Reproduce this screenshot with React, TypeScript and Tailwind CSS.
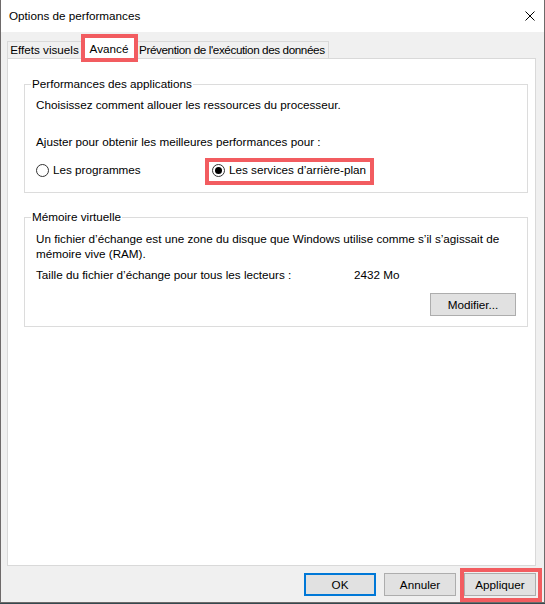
import React from "react";

function Radio({ checked, label }: { checked?: boolean; label: string }) {
  return (
    <span className="flex items-center gap-[4px]">
      <span className="w-[13px] h-[13px] rounded-full border border-[#333] bg-white flex items-center justify-center">
        {checked && <span className="w-[7px] h-[7px] rounded-full bg-black" />}
      </span>
      <span>{label}</span>
    </span>
  );
}

function Btn({ label, primary, className }: { label: string; primary?: boolean; className?: string }) {
  return (
    <div
      className={
        "w-[72px] h-[23px] flex items-center justify-center bg-[#e1e1e1] " +
        (primary ? "border-2 border-[#0078d7]" : "border border-[#adadad]") +
        (className ? " " + className : "")
      }
    >
      {label}
    </div>
  );
}

export default function App() {
  return (
    <div
      className="w-[545px] h-[604px] bg-[#34494f] text-[11.7px] text-black leading-[16px]"
      style={{ fontFamily: '"Segoe UI", "Liberation Sans", Arial, sans-serif' }}
    >
      <div className="h-[603px] flex flex-col border-x border-b border-[#6e6a6a]">
        {/* Title bar */}
        <div className="h-[32px] bg-white flex items-center justify-between pl-[8px] pr-[9px] shrink-0">
          <span>Options de performances</span>
          <svg width="10" height="10" viewBox="0 0 10 10" className="text-black">
            <path d="M0.5 0.5 L9.5 9.5 M9.5 0.5 L0.5 9.5" stroke="currentColor" strokeWidth="1" />
          </svg>
        </div>

        {/* Body */}
        <div className="flex-1 bg-[#f0f0f0] flex flex-col pl-[6px] pr-[8px]">
          {/* Tabs */}
          <div className="h-[26px] flex items-end shrink-0 whitespace-nowrap">
            <div className="w-[74px] h-[17px] border-t border-l border-[#d9d9d9] flex items-center justify-center">
              Effets visuels
            </div>
            <div className="relative z-10 w-[54px] h-[22px] -mb-px bg-white border-t border-x border-[#d9d9d9] flex items-center justify-center pl-[2px]">
              Avancé
              <div className="absolute left-[-1px] top-[-4px] w-[57px] h-[28px] border-4 border-[#f25c60]" />
            </div>
            <div className="h-[17px] border-t border-r border-[#d9d9d9] flex items-center pl-[4px] pr-[3px] tracking-[-0.4px]">
              Prévention de l'exécution des données
            </div>
          </div>

          {/* Panel */}
          <div className="h-[508px] bg-white border border-[#d9d9d9] pl-[16px] pt-[17px] shrink-0">
            <fieldset className="w-[504px] border border-[#dcdcdc] px-[6px] pb-[14px]">
              <legend className="px-[1px]">Performances des applications</legend>
              <div className="pl-[5px]">
                <p className="mt-[5px]">Choisissez comment allouer les ressources du processeur.</p>
                <p className="mt-[21px]">Ajuster pour obtenir les meilleures performances pour :</p>
                <div className="mt-[12px] flex">
                  <div className="w-[176px]">
                    <Radio label="Les programmes" />
                  </div>
                  <div className="relative">
                    <Radio checked label="Les services d’arrière-plan" />
                    <div className="absolute left-[-7px] top-[-4px] w-[169px] h-[27px] border-4 border-[#f25c60]" />
                  </div>
                </div>
              </div>
            </fieldset>

            <fieldset className="mt-[16px] w-[504px] border border-[#dcdcdc] px-[6px] pb-[10px]">
              <legend className="px-[1px]">Mémoire virtuelle</legend>
              <div className="pl-[5px] leading-[15px]">
                <p className="mt-[6px]">
                  Un fichier d’échange est une zone du disque que Windows utilise comme s’il s’agissait de
                  <br />
                  mémoire vive (RAM).
                </p>
                <div className="mt-[6px] flex">
                  <span className="w-[318px]">Taille du fichier d’échange pour tous les lecteurs :</span>
                  <span>2432 Mo</span>
                </div>
                <div className="mt-[11px] flex justify-end pr-[5px]">
                  <div className="w-[86px] h-[23px] flex items-center justify-center bg-[#e1e1e1] border border-[#adadad]">
                    Modifier...
                  </div>
                </div>
              </div>
            </fieldset>
          </div>

          {/* Buttons */}
          <div className="mt-[7px] flex justify-end gap-[8px]">
            <Btn label="OK" primary />
            <Btn label="Annuler" />
            <div className="relative">
              <Btn label="Appliquer" />
              <div className="absolute left-[-4px] top-[-5px] w-[82px] h-[34px] border-4 border-[#f25c60]" />
            </div>
          </div>
        </div>
      </div>
    </div>
  );
}
